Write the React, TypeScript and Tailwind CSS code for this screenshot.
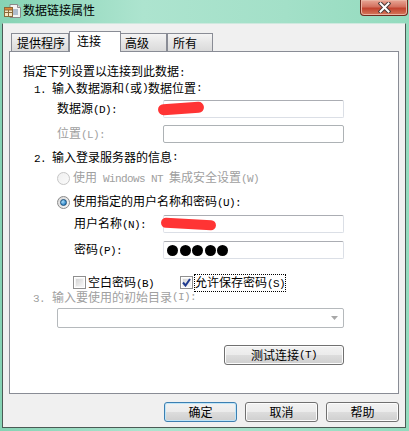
import React from "react";

function Txt({ s }: { s: string }) {
  const parts = s.split(/([\x20-\x7e]+)/).filter((p) => p.length > 0);
  return (
    <>
      {parts.map((p, i) =>
        /^[\x20-\x7e]+$/.test(p) ? (
          <span key={i} className="font-['Liberation_Mono',monospace] text-[11px] tracking-[-0.6px] whitespace-pre">
            {p}
          </span>
        ) : (
          <span key={i}>{p}</span>
        )
      )}
    </>
  );
}

function Input({ disabled, children }: { disabled?: boolean; children?: React.ReactNode }) {
  return (
    <div
      className={
        "relative w-[181px] h-[18px] bg-white border rounded-[2px] " +
        (disabled
          ? "border-[#adb2b5]"
          : "border-[#dbdfe6] border-t-[#abadb3] border-l-[#e2e3ea]")
      }
    >
      {children}
    </div>
  );
}

function Scribble({ className }: { className: string }) {
  return <div className={"absolute rounded-full bg-[#ff3434] " + className} />;
}

function Radio({ checked, disabled }: { checked?: boolean; disabled?: boolean }) {
  return (
    <div
      className={
        "w-[13px] h-[13px] rounded-full border flex items-center justify-center " +
        (disabled
          ? "border-[#c6c6c6] bg-[linear-gradient(135deg,#f0f0f0,#fafafa)]"
          : "border-[#8a8a8a] bg-[linear-gradient(135deg,#d8d8d8,#f8f8f8)]")
      }
    >
      {checked && (
        <div className="w-[7px] h-[7px] rounded-full border border-[#1a4f7a] bg-[radial-gradient(circle_at_35%_35%,#a9dcf8,#2f86c9_70%,#1c5f99)]" />
      )}
    </div>
  );
}

function Check({ checked }: { checked?: boolean }) {
  return (
    <div className="relative w-[13px] h-[13px] border border-[#8f8f8f] bg-white p-[1px]">
      <div className="w-full h-full bg-[linear-gradient(135deg,#d4d4d4,#f6f6f6)] border border-[#f4f4f4]" />
      {checked && (
        <svg className="absolute left-[1px] top-[1px]" width="9" height="9" viewBox="0 0 9 9">
          <path d="M1 4.5 L3.5 7.5 L8 1" stroke="#1f3a8f" strokeWidth="2" fill="none" />
        </svg>
      )}
    </div>
  );
}

function Btn({ children, def, w }: { children: React.ReactNode; def?: boolean; w: string }) {
  return (
    <div
      className={
        "h-[20px] rounded-[3px] border flex items-center justify-center leading-[14px] bg-[linear-gradient(#f2f2f2,#ebebeb_50%,#dddddd_50%,#cfcfcf)] " +
        (def
          ? "border-[#3c7fb1] shadow-[inset_0_0_0_1px_#bfe5f8] "
          : "border-[#707070] shadow-[inset_0_0_0_1px_#fcfcfc] ") +
        w
      }
    >
      {children}
    </div>
  );
}

export default function App() {
  return (
    <div className="w-[409px] h-[431px] flex flex-col bg-[linear-gradient(to_right,#86d3b4,#ade4cf_35%,#a3e0c8_70%,#93dbbe)] font-['Noto_Sans_CJK_SC',sans-serif] text-[12px] text-black">
      {/* title bar */}
      <div className="h-[23px] flex items-start shrink-0">
        <svg className="ml-[4px] mt-[4px]" width="17" height="14" viewBox="0 0 17 14">
          <path d="M6 0.5 H13.5 L16.5 3.5 V13.5 H6 Z" fill="#f4f4f4" stroke="#8a8a8a" />
          <path d="M13.5 0.5 V3.5 H16.5" fill="#dcdcdc" stroke="#8a8a8a" />
          <path d="M9 6 H14 M9 8 H14 M9 10 H14" stroke="#6f88a8" />
          <rect x="0.5" y="3.5" width="8" height="9" fill="#f7e7c4" stroke="#8a6a3a" />
          <rect x="0.5" y="3.5" width="8" height="2.5" fill="#e0883a" stroke="#8a6a3a" />
          <path d="M0.5 8.5 H8.5 M4.5 6 V12.5" stroke="#8a6a3a" />
        </svg>
        <div className="ml-[2px] mt-[2px] leading-[15px] text-[12px] text-black">数据链接属性</div>
        <div className="ml-auto mr-[1px] w-[48px] h-[16px] rounded-b-[4px] border border-t-0 border-[#6e2a1e] bg-[linear-gradient(#e9a796,#d3715f_45%,#c2432f_55%,#d5795c)] shadow-[inset_0_0_0_1px_#eab4a3] flex items-center justify-center">
          <svg width="13" height="11" viewBox="0 0 13 11">
            <path d="M2.5 1.5 L10.5 9.5 M10.5 1.5 L2.5 9.5" stroke="#4a3a38" strokeWidth="4" strokeLinecap="square" />
            <path d="M2.5 1.5 L10.5 9.5 M10.5 1.5 L2.5 9.5" stroke="#ffffff" strokeWidth="2" strokeLinecap="square" />
          </svg>
        </div>
      </div>

      {/* client area */}
      <div className="flex-1 ml-[2px] mr-[3px] mb-[3px] border border-[#4b5a55] border-t-[#cfe9df] bg-[#f0f0f0] flex flex-col pl-[6px] pr-[6px] pt-[7px]">
        {/* tabs */}
        <div className="relative z-10 -mb-[1px] h-[21px] flex items-end pl-[2px]">
          <div className="w-[58px] h-[18px] mb-[1px] border border-b-0 border-[#898c95] bg-[linear-gradient(#f4f4f4,#e6e6e6_50%,#dadada)] pl-[5px] leading-[17px]">
            提供程序
          </div>
          <div className="w-[52px] h-[21px] border border-b-0 border-[#898c95] bg-white pl-[7px] leading-[18px]">
            连接
          </div>
          <div className="w-[46px] h-[18px] mb-[1px] border border-b-0 border-l-0 border-[#898c95] bg-[linear-gradient(#f4f4f4,#e6e6e6_50%,#dadada)] pl-[4px] leading-[17px]">
            高级
          </div>
          <div className="w-[46px] h-[18px] mb-[1px] border border-b-0 border-[#898c95] bg-[linear-gradient(#f4f4f4,#e6e6e6_50%,#dadada)] pl-[5px] leading-[17px]">
            所有
          </div>
        </div>

        {/* panel */}
        <div className="h-[343px] border border-[#898c95] bg-white flex flex-col">
          <div className="mt-[12px] ml-[13px] h-[14px] leading-[14px]">
            <Txt s="指定下列设置以连接到此数据:" />
          </div>
          <div className="mt-[3px] ml-[24px] h-[14px] leading-[14px] flex">
            <span className="w-[18px]">
              <Txt s="1." />
            </span>
            <Txt s="输入数据源和(或)数据位置:" />
          </div>
          <div className="mt-[5px] ml-[47px] h-[18px] flex items-center">
            <div className="w-[106px] leading-[14px]">
              <Txt s="数据源(D):" />
            </div>
            <Input>
              <Scribble className="left-[-6px] top-[2px] w-[46px] h-[11px] rotate-[-4deg]" />
            </Input>
          </div>
          <div className="mt-[7px] ml-[47px] h-[18px] flex items-center">
            <div className="w-[106px] leading-[14px] text-[#a0a0a0]">
              <Txt s="位置(L):" />
            </div>
            <Input disabled />
          </div>
          <div className="mt-[7px] ml-[24px] h-[14px] leading-[14px] flex">
            <span className="w-[18px]">
              <Txt s="2." />
            </span>
            <Txt s="输入登录服务器的信息:" />
          </div>
          <div className="mt-[7px] ml-[47px] h-[14px] flex items-center gap-[3px]">
            <Radio disabled />
            <div className="leading-[14px] text-[#a0a0a0]">
              <Txt s="使用 Windows NT 集成安全设置(W)" />
            </div>
          </div>
          <div className="mt-[10px] ml-[47px] h-[14px] flex items-center gap-[3px]">
            <Radio checked />
            <div className="leading-[14px]">
              <Txt s="使用指定的用户名称和密码(U):" />
            </div>
          </div>
          <div className="mt-[6px] ml-[64px] h-[18px] flex items-center">
            <div className="w-[89px] leading-[14px]">
              <Txt s="用户名称(N):" />
            </div>
            <Input>
              <Scribble className="left-[-3px] top-[3px] w-[55px] h-[10px] rotate-[3deg]" />
            </Input>
          </div>
          <div className="mt-[8px] ml-[64px] h-[18px] flex items-center">
            <div className="w-[89px] leading-[14px]">
              <Txt s="密码(P):" />
            </div>
            <Input>
              <div className="flex items-center h-full pl-[3px] gap-[1.5px]">
                <div className="w-[11px] h-[11px] rounded-full bg-black" />
                <div className="w-[11px] h-[11px] rounded-full bg-black" />
                <div className="w-[11px] h-[11px] rounded-full bg-black" />
                <div className="w-[11px] h-[11px] rounded-full bg-black" />
                <div className="w-[11px] h-[11px] rounded-full bg-black" />
              </div>
            </Input>
          </div>
          <div className="mt-[16px] ml-[63px] h-[15px] flex items-center">
            <div className="w-[107px] flex items-center gap-[2px]">
              <Check />
              <div className="leading-[14px]">
                <Txt s="空白密码(B)" />
              </div>
            </div>
            <div className="flex items-center gap-[1px]">
              <Check checked />
              <div className="leading-[13px] border border-dotted border-black">
                <Txt s="允许保存密码(S)" />
              </div>
            </div>
          </div>
          <div className="mt-[0px] ml-[23px] h-[14px] leading-[14px] flex text-[#a0a0a0]">
            <span className="w-[19px]">
              <Txt s="3." />
            </span>
            <Txt s="输入要使用的初始目录(I):" />
          </div>
          <div className="mt-[4px] ml-[47px] w-[287px] h-[20px] border border-[#b5b9bc] rounded-[2px] bg-white flex items-center justify-end pr-[5px]">
            <svg width="7" height="4" viewBox="0 0 7 4">
              <path d="M0 0 H7 L3.5 4 Z" fill="#a8a8a8" />
            </svg>
          </div>
          <div className="mt-[17px] ml-[214px]">
            <Btn w="w-[120px]">
              <Txt s="测试连接(T)" />
            </Btn>
          </div>
        </div>

        {/* bottom buttons */}
        <div className="mt-[8px] flex justify-end gap-[8px]">
          <Btn def w="w-[73px]">确定</Btn>
          <Btn w="w-[73px]">取消</Btn>
          <Btn w="w-[73px]">帮助</Btn>
        </div>
      </div>
    </div>
  );
}
